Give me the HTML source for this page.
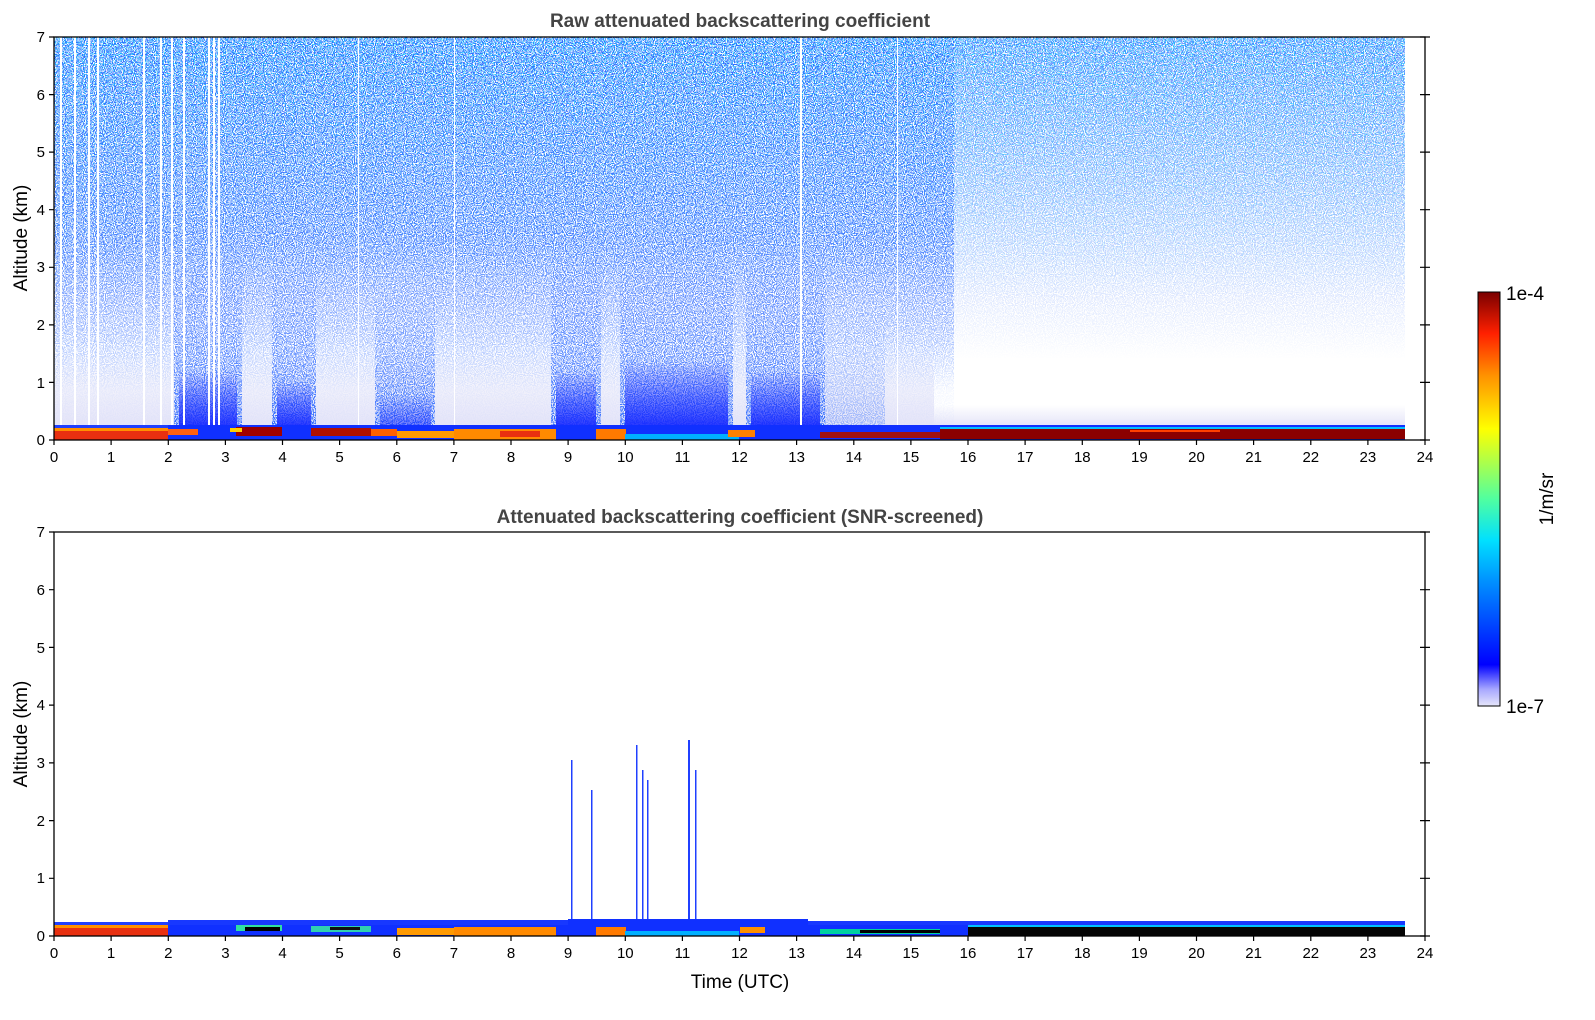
<!DOCTYPE html>
<html><head><meta charset="utf-8"><style>
html,body{margin:0;padding:0;background:#fff;}
svg{display:block;font-family:"Liberation Sans","DejaVu Sans",sans-serif;}
</style></head><body>
<svg width="1595" height="1020" viewBox="0 0 1595 1020" xmlns="http://www.w3.org/2000/svg">
<defs>
<filter id="nb" x="54" y="37" width="1353" height="403" filterUnits="userSpaceOnUse">
<feTurbulence type="fractalNoise" baseFrequency="0.9" numOctaves="1" seed="3"/>
<feColorMatrix type="matrix" values="0 0 0 0 0.03  0 0 0 0 0.15  0 0 0 0 1  16 0 0 0 -7.4"/>
</filter>
<filter id="nc" x="54" y="37" width="1353" height="403" filterUnits="userSpaceOnUse">
<feTurbulence type="fractalNoise" baseFrequency="0.9" numOctaves="1" seed="11"/>
<feColorMatrix type="matrix" values="0 0 0 0 0  0 0 0 0 0.75  0 0 0 0 1  16 0 0 0 -8.8"/>
</filter>
<linearGradient id="gl" x1="0" y1="37" x2="0" y2="440" gradientUnits="userSpaceOnUse">
<stop offset="0" stop-color="#fff" stop-opacity="1"/>
<stop offset="0.5" stop-color="#fff" stop-opacity="0.85"/>
<stop offset="0.75" stop-color="#fff" stop-opacity="0.4"/>
<stop offset="0.88" stop-color="#fff" stop-opacity="0.05"/>
<stop offset="1" stop-color="#fff" stop-opacity="0"/>
</linearGradient>
<linearGradient id="gr" x1="0" y1="37" x2="0" y2="440" gradientUnits="userSpaceOnUse">
<stop offset="0" stop-color="#fff" stop-opacity="0.85"/>
<stop offset="0.35" stop-color="#fff" stop-opacity="0.5"/>
<stop offset="0.65" stop-color="#fff" stop-opacity="0.15"/>
<stop offset="0.8" stop-color="#fff" stop-opacity="0"/>
</linearGradient>
<linearGradient id="gcol" x1="0" y1="0" x2="0" y2="1">
<stop offset="0" stop-color="#fff" stop-opacity="0"/>
<stop offset="1" stop-color="#fff" stop-opacity="1"/>
</linearGradient>
<linearGradient id="gcy" x1="0" y1="0" x2="0" y2="1">
<stop offset="0" stop-color="#fff" stop-opacity="0.7"/>
<stop offset="1" stop-color="#fff" stop-opacity="0"/>
</linearGradient>
<linearGradient id="gdb" x1="0" y1="0" x2="0" y2="1">
<stop offset="0" stop-color="#1a2cff" stop-opacity="0"/>
<stop offset="1" stop-color="#1a2cff" stop-opacity="0.95"/>
</linearGradient>
<linearGradient id="glav" x1="0" y1="0" x2="0" y2="1">
<stop offset="0" stop-color="#e4e4f8" stop-opacity="0"/>
<stop offset="1" stop-color="#e4e4f8" stop-opacity="1"/>
</linearGradient>
<mask id="mt" maskUnits="userSpaceOnUse" x="0" y="0" width="1595" height="1020">
<rect x="54" y="37" width="900" height="403" fill="url(#gl)"/>
<rect x="954" y="37" width="451" height="403" fill="url(#gr)"/>
<rect x="174" y="230" width="68" height="195" fill="url(#gcol)"/>
<rect x="272" y="250" width="44" height="175" fill="url(#gcol)"/>
<rect x="375" y="280" width="60" height="145" fill="url(#gcol)"/>
<rect x="551" y="230" width="50" height="195" fill="url(#gcol)"/>
<rect x="620" y="230" width="113" height="195" fill="url(#gcol)"/>
<rect x="746" y="230" width="79" height="195" fill="url(#gcol)"/>
<rect x="825" y="300" width="60" height="125" fill="url(#gcol)" opacity="0.4"/>
</mask>
<mask id="mc" maskUnits="userSpaceOnUse" x="0" y="0" width="1595" height="1020">
<rect x="54" y="37" width="1351" height="260" fill="url(#gcy)"/>
</mask>
<linearGradient id="cb" x1="0" y1="1" x2="0" y2="0">
<stop offset="0" stop-color="#e6e6fa"/>
<stop offset="0.04" stop-color="#a8a8ff"/>
<stop offset="0.1" stop-color="#0000ff"/>
<stop offset="0.3" stop-color="#0090ff"/>
<stop offset="0.4" stop-color="#00e0ff"/>
<stop offset="0.5" stop-color="#50ffa0"/>
<stop offset="0.6" stop-color="#b8ff40"/>
<stop offset="0.67" stop-color="#ffff00"/>
<stop offset="0.8" stop-color="#ff9000"/>
<stop offset="0.9" stop-color="#ff2000"/>
<stop offset="1" stop-color="#7a0000"/>
</linearGradient>
</defs>

<!-- TOP PLOT -->
<text x="740" y="27" text-anchor="middle" font-size="19" font-weight="bold" fill="#444">Raw attenuated backscattering coefficient</text>
<rect x="54" y="350" width="880" height="76" fill="url(#glav)"/>
<rect x="934" y="405" width="471" height="21" fill="url(#glav)"/>
<rect x="54" y="37" width="1351" height="403" filter="url(#nb)" mask="url(#mt)"/>
<rect x="54" y="37" width="1351" height="403" filter="url(#nc)" mask="url(#mc)"/>
<rect x="179" y="370" width="58" height="57" fill="url(#gdb)"/>
<rect x="277" y="380" width="34" height="47" fill="url(#gdb)"/>
<rect x="380" y="395" width="51" height="32" fill="url(#gdb)" opacity="0.6"/>
<rect x="556" y="370" width="40" height="57" fill="url(#gdb)"/>
<rect x="625" y="360" width="103" height="67" fill="url(#gdb)"/>
<rect x="751" y="370" width="69" height="57" fill="url(#gdb)"/>
<g fill="#fff">
<rect x="60" y="37" width="2" height="390"/><rect x="74" y="37" width="2" height="390"/><rect x="88" y="37" width="2" height="390"/>
<rect x="97" y="37" width="2" height="390"/><rect x="143" y="37" width="2" height="390"/><rect x="160" y="37" width="2" height="390"/>
<rect x="171" y="37" width="2" height="390"/><rect x="183" y="37" width="2" height="390"/><rect x="208" y="37" width="2" height="390"/>
<rect x="213" y="37" width="2" height="390"/><rect x="218" y="37" width="2" height="390"/><rect x="358" y="37" width="1" height="390"/>
<rect x="454" y="37" width="1" height="390"/><rect x="800" y="37" width="2" height="390"/><rect x="897" y="37" width="1" height="390"/>
</g>
<rect x="54" y="425" width="1351" height="15" fill="#1030ff"/>
<rect x="54" y="425" width="114" height="3" fill="#2040ff"/>
<rect x="54" y="428" width="114" height="3" fill="#ff9000"/>
<rect x="54" y="431" width="114" height="9" fill="#e83010"/>
<rect x="168" y="429" width="30" height="6" fill="#ff6010"/>
<rect x="236" y="427" width="46" height="9" fill="#a00000"/>
<rect x="230" y="428" width="12" height="4" fill="#ffd000"/>
<rect x="311" y="428" width="60" height="8" fill="#b01000"/>
<rect x="371" y="429" width="26" height="7" fill="#ff6000"/>
<rect x="397" y="431" width="57" height="7" fill="#ff9a00"/>
<rect x="454" y="429" width="102" height="11" fill="#ff8a00"/>
<rect x="500" y="431" width="40" height="6" fill="#e83010"/>
<rect x="596" y="429" width="30" height="11" fill="#ff7a00"/>
<rect x="625" y="434" width="114" height="6" fill="#00b0ff"/>
<rect x="728" y="430" width="27" height="7" fill="#ff8000"/>
<rect x="820" y="432" width="120" height="6" fill="#a01010"/>
<rect x="940" y="429" width="465" height="10" fill="#8b0000"/>
<rect x="940" y="427" width="465" height="2" fill="#00c0ff"/>
<rect x="1130" y="430" width="90" height="2" fill="#ff4000"/>
<rect x="54" y="37" width="1371" height="403" fill="none" stroke="#000" stroke-width="1.3"/>

<!-- BOTTOM PLOT -->
<text x="740" y="523" text-anchor="middle" font-size="19" font-weight="bold" fill="#444">Attenuated backscattering coefficient (SNR-screened)</text>
<g fill="#2040ff">
<rect x="571" y="760" width="1.5" height="160"/><rect x="591" y="790" width="1.5" height="130"/>
<rect x="636" y="745" width="1.5" height="175"/><rect x="642" y="770" width="1.5" height="150"/><rect x="647" y="780" width="1.5" height="140"/>
<rect x="688" y="740" width="2" height="180"/><rect x="695" y="770" width="1.5" height="150"/>
</g>
<rect x="54" y="924" width="1351" height="12" fill="#1030ff"/>
<rect x="168" y="920" width="400" height="5" fill="#1838ff"/>
<rect x="568" y="919" width="240" height="6" fill="#1030ff"/>
<rect x="808" y="921" width="597" height="4" fill="#1838ff"/>
<rect x="54" y="922" width="114" height="3" fill="#2040ff"/>
<rect x="54" y="925" width="114" height="3" fill="#ff9000"/>
<rect x="54" y="928" width="114" height="8" fill="#e83010"/>
<rect x="236" y="925" width="46" height="6" fill="#30e0a0"/>
<rect x="245" y="927" width="35" height="4" fill="#000"/>
<rect x="311" y="926" width="60" height="6" fill="#30d0b0"/>
<rect x="330" y="927" width="30" height="3" fill="#101010"/>
<rect x="397" y="928" width="57" height="7" fill="#ff9a00"/>
<rect x="454" y="927" width="102" height="9" fill="#ff8a00"/>
<rect x="596" y="927" width="30" height="9" fill="#ff7a00"/>
<rect x="625" y="931" width="114" height="5" fill="#00b0ff"/>
<rect x="740" y="927" width="25" height="6" fill="#ff9000"/>
<rect x="820" y="929" width="120" height="5" fill="#00d0a0"/>
<rect x="860" y="930" width="80" height="3" fill="#000"/>
<rect x="968" y="927" width="437" height="9" fill="#050505"/>
<rect x="968" y="925" width="437" height="2" fill="#00c0ff"/>
<rect x="54" y="532" width="1371" height="404" fill="none" stroke="#000" stroke-width="1.3"/>

<g stroke="#000" stroke-width="1.2">
<path d="M54 440v5M111.1 440v5M168.3 440v5M225.4 440v5M282.5 440v5M339.6 440v5M396.8 440v5M453.9 440v5M511 440v5M568.1 440v5M625.3 440v5M682.4 440v5M739.5 440v5M796.6 440v5M853.8 440v5M910.9 440v5M968 440v5M1025.1 440v5M1082.3 440v5M1139.4 440v5M1196.5 440v5M1253.6 440v5M1310.8 440v5M1367.9 440v5M1425 440v5"/>
<path d="M54 936v5M111.1 936v5M168.3 936v5M225.4 936v5M282.5 936v5M339.6 936v5M396.8 936v5M453.9 936v5M511 936v5M568.1 936v5M625.3 936v5M682.4 936v5M739.5 936v5M796.6 936v5M853.8 936v5M910.9 936v5M968 936v5M1025.1 936v5M1082.3 936v5M1139.4 936v5M1196.5 936v5M1253.6 936v5M1310.8 936v5M1367.9 936v5M1425 936v5"/>
<path d="M49 440h5M49 382.4h5M49 324.9h5M49 267.3h5M49 209.7h5M49 152.1h5M49 94.6h5M49 37h5"/>
<path d="M1420 440h10M1420 382.4h10M1420 324.9h10M1420 267.3h10M1420 209.7h10M1420 152.1h10M1420 94.6h10M1420 37h10"/>
<path d="M49 936h5M49 878.3h5M49 820.6h5M49 762.9h5M49 705.1h5M49 647.4h5M49 589.7h5M49 532h5"/>
<path d="M1420 936h10M1420 878.3h10M1420 820.6h10M1420 762.9h10M1420 705.1h10M1420 647.4h10M1420 589.7h10M1420 532h10"/>
</g>
<g font-size="15" fill="#000" text-anchor="middle">
<g transform="translate(0,462)">
<text x="54">0</text><text x="111.1">1</text><text x="168.3">2</text><text x="225.4">3</text><text x="282.5">4</text><text x="339.6">5</text><text x="396.8">6</text><text x="453.9">7</text><text x="511">8</text><text x="568.1">9</text><text x="625.3">10</text><text x="682.4">11</text><text x="739.5">12</text><text x="796.6">13</text><text x="853.8">14</text><text x="910.9">15</text><text x="968">16</text><text x="1025.1">17</text><text x="1082.3">18</text><text x="1139.4">19</text><text x="1196.5">20</text><text x="1253.6">21</text><text x="1310.8">22</text><text x="1367.9">23</text><text x="1425">24</text>
</g>
<g transform="translate(0,958)">
<text x="54">0</text><text x="111.1">1</text><text x="168.3">2</text><text x="225.4">3</text><text x="282.5">4</text><text x="339.6">5</text><text x="396.8">6</text><text x="453.9">7</text><text x="511">8</text><text x="568.1">9</text><text x="625.3">10</text><text x="682.4">11</text><text x="739.5">12</text><text x="796.6">13</text><text x="853.8">14</text><text x="910.9">15</text><text x="968">16</text><text x="1025.1">17</text><text x="1082.3">18</text><text x="1139.4">19</text><text x="1196.5">20</text><text x="1253.6">21</text><text x="1310.8">22</text><text x="1367.9">23</text><text x="1425">24</text>
</g>
</g>
<g font-size="15" fill="#000" text-anchor="end">
<text x="45" y="445">0</text><text x="45" y="388">1</text><text x="45" y="330">2</text><text x="45" y="272">3</text><text x="45" y="215">4</text><text x="45" y="157">5</text><text x="45" y="100">6</text><text x="45" y="42">7</text>
<text x="45" y="941">0</text><text x="45" y="883">1</text><text x="45" y="826">2</text><text x="45" y="768">3</text><text x="45" y="710">4</text><text x="45" y="653">5</text><text x="45" y="595">6</text><text x="45" y="537">7</text>
</g>
<text transform="translate(27,238) rotate(-90)" text-anchor="middle" font-size="19" fill="#000">Altitude (km)</text>
<text transform="translate(27,734) rotate(-90)" text-anchor="middle" font-size="19" fill="#000">Altitude (km)</text>
<text x="740" y="988" text-anchor="middle" font-size="19" fill="#000">Time (UTC)</text>

<rect x="1478" y="292" width="22" height="414" fill="url(#cb)" stroke="#000" stroke-width="1"/>
<text x="1506" y="300" font-size="19" fill="#000">1e-4</text>
<text x="1506" y="713" font-size="19" fill="#000">1e-7</text>
<text transform="translate(1553,499) rotate(-90)" text-anchor="middle" font-size="19" fill="#000">1/m/sr</text>
</svg>
</body></html>
